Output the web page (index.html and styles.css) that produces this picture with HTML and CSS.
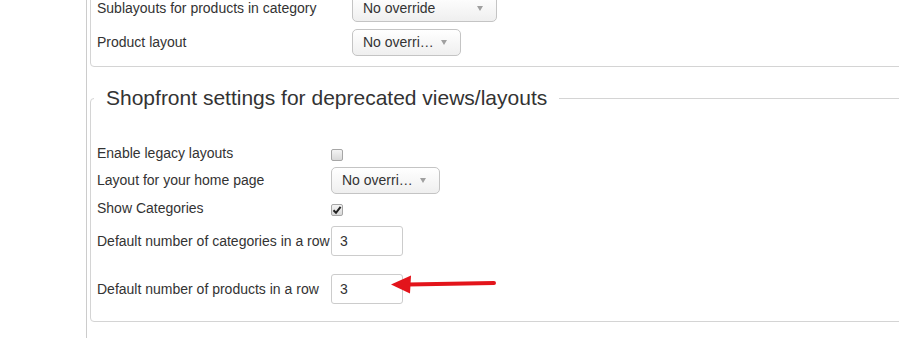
FILE: index.html
```html
<!DOCTYPE html>
<html lang="en">
<head>
    <meta charset="UTF-8">
    <title>Shopfront settings</title>
    <link rel="stylesheet" href="styles.css">
</head>
<body>
    <div class="page">
        <fieldset class="panel panel-top">
            <div class="row row-a">
                <label class="lbl lbl-top">Sublayouts for products in category</label>
                <span class="select sel-wide">No override<i class="caret"></i></span>
            </div>
            <div class="row row-a">
                <label class="lbl lbl-top">Product layout</label>
                <span class="select sel-short">No overri…<i class="caret"></i></span>
            </div>
        </fieldset>

        <fieldset class="panel panel-legacy">
            <legend>Shopfront settings for deprecated views/layouts</legend>
            <div class="rows">
                <div class="row row-b">
                    <label class="lbl lbl-legacy">Enable legacy layouts</label>
                    <span class="check"></span>
                </div>
                <div class="row row-c">
                    <label class="lbl lbl-legacy">Layout for your home page</label>
                    <span class="select sel-short">No overri…<i class="caret"></i></span>
                </div>
                <div class="row row-c">
                    <label class="lbl lbl-legacy">Show Categories</label>
                    <span class="check checked">
                        <svg width="10" height="10" viewBox="0 0 10 10"><path d="M1.5 5.2 L4 7.8 L8.6 1.8" fill="none" stroke="#222" stroke-width="2"/></svg>
                    </span>
                </div>
                <div class="row row-d">
                    <label class="lbl lbl-legacy">Default number of categories in a row</label>
                    <span class="field">3</span>
                </div>
                <div class="row row-e">
                    <label class="lbl lbl-legacy">Default number of products in a row</label>
                    <span class="field">3</span>
                </div>
            </div>
        </fieldset>

        <svg class="arrow" width="112" height="24" viewBox="0 0 112 24">
            <path d="M18 11.5 L104 10" stroke="#e3141b" stroke-width="4" stroke-linecap="round" fill="none"/>
            <polygon points="1,11.5 21,2.5 20,20.5" fill="#e3141b"/>
        </svg>
    </div>
</body>
</html>
```

FILE: styles.css
```css
html, body { margin: 0; padding: 0; background: #fff; overflow: hidden; }
body { font-family: "Liberation Sans", Arial, sans-serif; font-size: 14px; color: #333; }

.page { position: relative; margin-left: 86px; border-left: 1px solid #ccc; min-height: 348px; padding-left: 3px; }

.panel { margin: 0 -40px 0 0; padding: 0 0 0 3px; border: 1px solid #d4d4d4; border-radius: 4px; min-width: 0; }
.panel-top { margin-top: -10px; padding-bottom: 7px; }
.panel-legacy { margin-top: 11px; padding-bottom: 12px; }

legend { font-size: 21px; line-height: 40px; padding: 0 12px; margin: 0; color: #333; }

.rows { padding-top: 22px; }
.row { display: flex; align-items: center; padding-left: 3px; }
.row-a { height: 34px; }
.row-b { height: 26px; }
.row-c { height: 28px; }
.row-d { height: 37px; }
.row-e { height: 40px; margin-top: 10px; }

.lbl { flex: none; white-space: nowrap; }
.lbl-top { width: 255px; }
.lbl-legacy { width: 234px; }

.select { display: flex; align-items: center; justify-content: space-between; box-sizing: border-box; height: 27px; padding: 0 13px 0 10px; border: 1px solid #c4c4c4; border-radius: 5px; background: linear-gradient(#ffffff, #efefef); white-space: nowrap; }
.sel-wide { width: 145px; }
.sel-short { width: 109px; }
.caret { width: 0; height: 0; border-left: 3.5px solid transparent; border-right: 3.5px solid transparent; border-top: 5px solid #a0a0a0; }

.check { display: flex; align-items: center; justify-content: center; box-sizing: border-box; width: 12px; height: 12px; margin-top: 3px; border: 1px solid #a6a6a6; border-radius: 2px; background: linear-gradient(#f4f4f4, #d9d9d9); }

.field { display: flex; align-items: center; box-sizing: border-box; width: 72px; height: 30px; padding-left: 8px; border: 1px solid #ccc; border-radius: 3px; background: #fff; }

.arrow { position: absolute; left: 303px; top: 283px; }
```
